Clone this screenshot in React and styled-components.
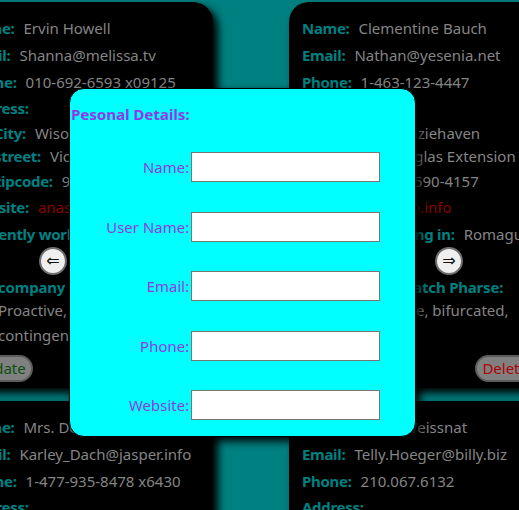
import React from "react";
import styled, { createGlobalStyle } from "styled-components";

const GlobalStyle = createGlobalStyle`
  body {
    margin: 0;
    background-color: #008080;
    overflow: hidden;
    font-family: "Noto Sans", "Open Sans", sans-serif;
  }
`;

const users = [
  {
    name: "Ervin Howell",
    email: "Shanna@melissa.tv",
    phone: "010-692-6593 x09125",
    city: "Wisokyburgh",
    street: "Victor Plains",
    zipcode: "90566-7771",
    website: "anastasia.net",
    company: "Deckow-Crist",
    catchPhrase: "Proactive didactic contingency",
  },
  {
    name: "Clementine Bauch",
    email: "Nathan@yesenia.net",
    phone: "1-463-123-4447",
    city: "McKenziehaven",
    street: "Douglas Extension",
    zipcode: "59590-4157",
    website: "ramiro.info",
    company: "Romaguera-Jacobson",
    catchPhrase: "Face to face bifurcated interface",
  },
  {
    name: "Mrs. Dennis Schulist",
    email: "Karley_Dach@jasper.info",
    phone: "1-477-935-8478 x6430",
    city: "South Christy",
    street: "Norberto Crossing",
    zipcode: "23505-1337",
    website: "ola.org",
    company: "Considine-Lockman",
    catchPhrase: "Synchronised bottom-line interface",
  },
  {
    name: "Kurtis Weissnat",
    email: "Telly.Hoeger@billy.biz",
    phone: "210.067.6132",
    city: "Howemouth",
    street: "Rex Trail",
    zipcode: "58804-1099",
    website: "elvis.io",
    company: "Johns Group",
    catchPhrase: "Configurable multimedia task-force",
  },
];

const formFields = ["Name", "User Name", "Email", "Phone", "Website"];

const UserCard = ({ user }) => {
  return (
    <Card>
      <Row $h={27}>
        <Label>Name:</Label>
        <Value>{user.name}</Value>
      </Row>
      <Row $h={27}>
        <Label>Email:</Label>
        <Value>{user.email}</Value>
      </Row>
      <Row $h={27}>
        <Label>Phone:</Label>
        <Value>{user.phone}</Value>
      </Row>
      <Row $h={25}>
        <Label>Address:</Label>
      </Row>
      <Row $h={24} $indent>
        <Label>City:</Label>
        <Value>{user.city}</Value>
      </Row>
      <Row $h={24} $indent>
        <Label>street:</Label>
        <Value>{user.street}</Value>
      </Row>
      <Row $h={25} $indent>
        <Label>zipcode:</Label>
        <Value>{user.zipcode}</Value>
      </Row>
      <Row $h={27}>
        <Label>Website:</Label>
        <Value $link>{user.website}</Value>
      </Row>
      <Row $h={27}>
        <Label>Currently working in:</Label>
        <Value>{user.company}</Value>
      </Row>
      <ArrowRow>
        <ArrowButton>⇐</ArrowButton>
        <ArrowButton>⇒</ArrowButton>
      </ArrowRow>
      <CatchBlock>
        <CatchTitle>company Catch Pharse:</CatchTitle>
        <CatchText>{user.catchPhrase.split(" ").join(", ")}</CatchText>
      </CatchBlock>
      <ButtonRow>
        <PillButton $kind="update">Update</PillButton>
        <PillButton $kind="delete">Delete</PillButton>
      </ButtonRow>
    </Card>
  );
};

const App = () => {
  return (
    <>
      <GlobalStyle />
      <CardGrid>
        {users.map((user) => (
          <UserCard key={user.email} user={user} />
        ))}
      </CardGrid>
      <Modal>
        <ModalTitle>Pesonal Details:</ModalTitle>
        <Form>
          {formFields.map((item) => (
            <React.Fragment key={item}>
              <FormLabel>{item}:</FormLabel>
              <FormInput type="text" />
            </React.Fragment>
          ))}
        </Form>
      </Modal>
    </>
  );
};

const CardGrid = styled.div`
  display: grid;
  grid-template-columns: 259px 259px;
  column-gap: 76px;
  row-gap: 13px;
  padding-top: 2px;
  margin-left: -46px;
`;

const Card = styled.div`
  display: flex;
  flex-direction: column;
  background-color: #000;
  border-radius: 20px;
  box-shadow: 5px 5px 8px #000;
  padding: 13px 13px 6px 13px;
  height: 386px;
  box-sizing: border-box;
  font-size: 15px;
`;

const Row = styled.div`
  display: flex;
  flex-direction: row;
  align-items: center;
  height: ${(p) => p.$h}px;
  padding-left: ${(p) => (p.$indent ? "27px" : "0")};
  white-space: nowrap;
`;

const Label = styled.span`
  color: #008080;
  font-weight: bold;
  letter-spacing: -0.3px;
  margin-right: 9px;
`;

const Value = styled.span`
  color: ${(p) => (p.$link ? "#8b0000" : "#858585")};
`;

const ArrowRow = styled.div`
  display: flex;
  flex-direction: row;
  justify-content: center;
  gap: 33px;
  height: 28px;
`;

const ArrowButton = styled.button`
  width: 28px;
  height: 28px;
  border-radius: 50%;
  border: 2px solid #6e6e6e;
  background-color: #efefef;
  color: #111;
  font-family: "DejaVu Sans", sans-serif;
  font-size: 16px;
  padding: 0;
  line-height: 1;
  box-shadow: 1px 1px 3px rgba(0, 0, 0, 0.6);
`;

const CatchBlock = styled.div`
  display: flex;
  flex-direction: column;
  padding-left: 31px;
  padding-top: 1px;
`;

const CatchTitle = styled.span`
  color: #008080;
  font-weight: bold;
  line-height: 22px;
  letter-spacing: -0.2px;
`;

const CatchText = styled.span`
  color: #858585;
  line-height: 25px;
  height: 50px;
`;

const ButtonRow = styled.div`
  display: flex;
  flex-direction: row;
  justify-content: space-between;
  margin-top: 7px;
`;

const PillButton = styled.button`
  height: 27px;
  padding: 0 5px;
  border-radius: 14px;
  border: 2px solid #5c5c5c;
  background-color: #808080;
  color: ${(p) => (p.$kind === "delete" ? "#b00000" : "#0d4f0d")};
  font-family: "Noto Sans", sans-serif;
  font-size: 15px;
  line-height: 1;
`;

const Modal = styled.div`
  position: fixed;
  left: 69px;
  top: 88px;
  width: 347px;
  height: 349px;
  background-color: #00ffff;
  border: 1px solid #000;
  border-radius: 15px;
  box-shadow: 4px 4px 8px #000;
  box-sizing: border-box;
  padding-top: 15px;
`;

const ModalTitle = styled.div`
  color: #9932e6;
  font-weight: bold;
  font-size: 15px;
  line-height: 20px;
  padding-left: 1px;
`;

const Form = styled.div`
  display: grid;
  grid-template-columns: 119px 189px;
  column-gap: 2px;
  row-gap: 29.5px;
  margin-top: 28px;
  align-items: center;
`;

const FormLabel = styled.label`
  color: #9932e6;
  font-size: 15px;
  text-align: right;
`;

const FormInput = styled.input`
  width: 189px;
  height: 30px;
  box-sizing: border-box;
  border: 1px solid #767676;
  background-color: #fff;
`;

export default App;
